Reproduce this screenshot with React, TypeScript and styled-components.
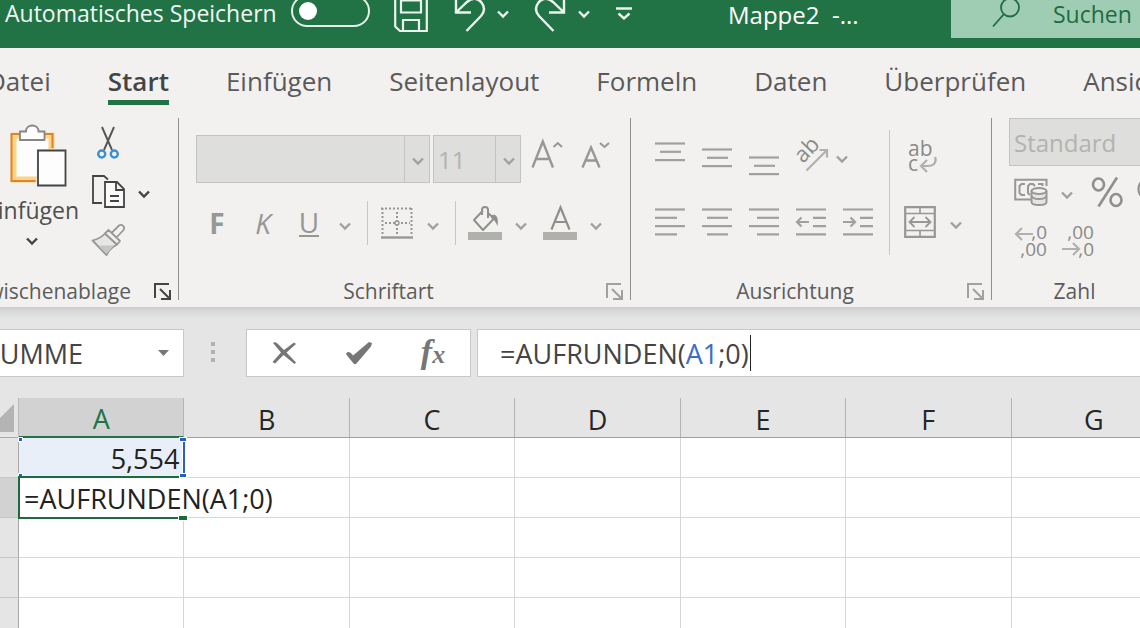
import React from 'react';
import styled, { createGlobalStyle, css } from 'styled-components';

const GlobalStyle = createGlobalStyle`
  *, *::before, *::after { box-sizing: border-box; }
  html, body { margin: 0; }
  body { background: #fff; overflow: hidden; }
  button, input, select { font: inherit; color: inherit; margin: 0; padding: 0; border: 0; background: none; }
  svg { display: block; flex: none; overflow: visible; }
`;

const ui = "'Open Sans', 'Noto Sans', sans-serif";
const green = '#217346';
const ink = '#444444';
const faded = '#a0a09e';

const Window = styled.div`
  display: flex;
  flex-direction: column;
  height: 100vh;
  overflow: hidden;
  font-family: ${ui};
  color: #4f4f4f;
  background: #fff;
`;

/* ---------- title bar ---------- */

const TitleBar = styled.header`
  display: flex;
  align-items: flex-start;
  flex: none;
  height: 48px;
  overflow: hidden;
  background: ${green};
  color: #f1f8f3;
  font-size: 23px;
  line-height: 26px;
  white-space: nowrap;
`;

const AutoSave = styled.label`
  display: flex;
  align-items: flex-start;
  justify-content: space-between;
  width: 370px;
  padding-left: 5px;
`;

const Toggle = styled.input`
  appearance: none;
  display: flex;
  align-items: center;
  width: 79px;
  height: 32px;
  margin-top: -5px;
  padding-left: 6px;
  border: 2px solid #e4f1e8;
  border-radius: 16px;

  &::before {
    content: '';
    width: 18px;
    height: 18px;
    border-radius: 50%;
    background: #fff;
  }
`;

const QuickAccess = styled.div`
  display: flex;
  align-items: center;
  gap: 26px;
  height: 28px;
  margin-left: 24px;
`;

const QuickPair = styled.div`
  display: flex;
  align-items: center;
  gap: 12px;
`;

const QuickButton = styled.button`
  display: flex;
  align-items: center;
  color: #e9f5ed;
`;

const DocTitle = styled.div`
  flex: 1;
  padding: 2px 0 0 96px;
  color: #fff;
  font-size: 24px;
  white-space: pre;
`;

const Search = styled.div`
  display: flex;
  align-items: flex-start;
  gap: 33px;
  width: 189px;
  height: 38px;
  padding-left: 41px;
  background: #9fcdb3;
  color: #1f6b41;
`;

const SearchInput = styled.input`
  flex: 1;
  min-width: 0;
  height: 28px;
  &::placeholder { color: #1f6b41; opacity: 1; }
`;

/* ---------- ribbon tabs ---------- */

const Tabs = styled.nav`
  display: flex;
  flex: none;
  gap: 57px;
  height: 64px;
  padding-top: 15px;
  overflow: hidden;
  background: #f2f1f0;
  font-size: 26px;
  line-height: 36px;
`;

const Tab = styled.button<{ $active?: boolean }>`
  flex: none;
  height: 42px;
  padding-bottom: 6px;
  color: #5a5a5a;
  &:first-child { margin-left: -13px; }
  ${p => p.$active && css`
    font-weight: 600;
    color: ${ink};
    border-bottom: 5px solid ${green};
    padding-bottom: 1px;
  `}
`;

/* ---------- ribbon ---------- */

const Ribbon = styled.div`
  display: flex;
  flex: none;
  padding: 6px 0 7px;
  overflow: hidden;
  background: #f2f1f0;
  border-bottom: 2px solid #cfcfcf;
`;

const Group = styled.section<{ $width: number; $last?: boolean }>`
  display: flex;
  flex-direction: column;
  justify-content: space-between;
  flex: none;
  width: ${p => p.$width}px;
  height: 182px;
  border-right: ${p => (p.$last ? 0 : 1)}px solid #8f8f8f;
`;

const GroupFooter = styled.footer`
  display: flex;
  align-items: center;
  height: 18px;
  padding-right: 7px;
  font-size: 21px;
  line-height: 18px;
  color: #5c5c5c;
`;

const GroupLabel = styled.span<{ $cropped?: boolean }>`
  flex: 1;
  padding-right: 8px;
  text-align: center;
  ${p => p.$cropped && css`
    display: flex;
    justify-content: flex-end;
    padding-right: 23px;
    width: 0;
  `}
`;

const ToolButton = styled.button<{ $width?: number }>`
  display: flex;
  align-items: center;
  justify-content: center;
  flex: none;
  width: ${p => p.$width ?? 34}px;
  height: 34px;
  color: ${faded};
`;

const ArrowButton = styled.button`
  display: flex;
  align-items: center;
  justify-content: center;
  flex: none;
  width: 20px;
  height: 34px;
  padding-top: 6px;
`;

const Split = styled.div<{ $gap?: number; $span?: number }>`
  display: flex;
  align-items: center;
  gap: ${p => p.$gap ?? 9}px;
  grid-column: span ${p => p.$span ?? 1};
`;

const Divider = styled.div<{ $height: number }>`
  flex: none;
  width: 1px;
  height: ${p => p.$height}px;
  background: #c6c6c4;
`;

const ClipboardBody = styled.div`
  display: flex;
  padding-top: 7px;
  gap: 11px;
`;

const PasteButton = styled.button`
  display: flex;
  flex-direction: column;
  align-items: center;
  width: 96px;
  margin-left: -16px;
  color: #4f4f4f;
  font-size: 23px;
  line-height: 30px;

  > svg:first-child { margin: 0 0 8px 12px; }
  > svg:last-child { margin-top: 12px; }
`;

const ClipboardTools = styled.div`
  display: flex;
  flex-direction: column;
  gap: 15px;
`;

const FontBody = styled.div`
  padding: 17px 0 0 17px;
`;

const FontRow = styled.div`
  display: flex;
  align-items: center;
  gap: 3px;
`;

const FormatRow = styled.div`
  display: flex;
  align-items: center;
  gap: 12px;
  margin-top: 18px;
  padding-left: 4px;
  font-size: 28px;
`;

const Combo = styled.div<{ $width: number }>`
  position: relative;
  flex: none;
  width: ${p => p.$width}px;
  height: 48px;
  border: 1px solid #c3c3c1;
  background: #dededd;
`;

const ComboSelect = styled.select`
  appearance: none;
  width: 100%;
  height: 100%;
  padding-left: 4px;
  font-size: 24px;
  color: #b3b3ae;
  opacity: 1;
`;

const ComboArrow = styled.span`
  position: absolute;
  top: 0;
  right: 0;
  display: flex;
  align-items: center;
  justify-content: center;
  width: 25px;
  height: 100%;
  padding: 4px 0 0 2px;
  border-left: 1px solid #c3c3c1;
  pointer-events: none;
`;

const Glyph = styled.span<{ $bold?: boolean; $italic?: boolean; $underline?: boolean }>`
  line-height: 26px;
  color: #979795;
  font-weight: ${p => (p.$bold ? 700 : 400)};
  font-style: ${p => (p.$italic ? 'italic' : 'normal')};
  ${p => p.$underline && css`border-bottom: 2px solid #979795;`}
`;

const AlignBody = styled.div`
  display: flex;
  padding: 12px 0 0 24px;
`;

const AlignGrid = styled.div`
  display: grid;
  grid-template-columns: repeat(5, 30px);
  grid-template-rows: 52px 80px;
  column-gap: 17px;
  align-items: center;
  margin-right: 16px;
`;

const WrapTools = styled.div`
  display: grid;
  grid-template-rows: 52px 80px;
  align-items: center;
  padding-left: 13px;
`;

const NumberBody = styled.div`
  display: flex;
  flex-direction: column;
  gap: 3px;
  padding-left: 17px;
`;

const NumberRow = styled.div`
  display: flex;
  align-items: center;
  gap: 13px;
  height: 46px;
  padding-left: 5px;
`;

/* ---------- formula bar ---------- */

const FormulaBar = styled.div`
  display: flex;
  flex: none;
  height: 89px;
  padding-top: 20px;
  overflow: hidden;
  background: linear-gradient(#d3d5d5, #e5e5e5 10px);
  font-size: 27px;
`;

const NameBox = styled.div`
  display: flex;
  align-items: center;
  flex: none;
  width: 208px;
  height: 48px;
  margin-left: -24px;
  padding-right: 14px;
  border: 1px solid #c8c8c8;
  background: #fff;
`;

const NameInput = styled.input`
  flex: 1;
  min-width: 0;
  padding-left: 8px;
  color: ${ink};
`;

const Grip = styled.div`
  display: grid;
  gap: 4px;
  align-content: center;
  flex: none;
  width: 62px;
  height: 46px;
  justify-content: center;
  padding-right: 4px;
  > i { width: 4px; height: 4px; background: #b2b2b2; }
`;

const Actions = styled.div`
  display: flex;
  align-items: center;
  justify-content: space-between;
  flex: none;
  width: 225px;
  height: 48px;
  margin-right: 6px;
  padding: 0 20px;
  border: 1px solid #c8c8c8;
  background: #fff;
  button { color: #767676; }
`;

const FxMark = styled.span`
  font: italic 700 34px/34px 'Liberation Serif', serif;
  small { font-size: 26px; }
`;

const FormulaField = styled.div`
  display: flex;
  align-items: center;
  flex: 1;
  height: 48px;
  padding-left: 22px;
  border: 1px solid #c8c8c8;
  border-right: 0;
  background: #fff;
  color: ${ink};
  outline: none;
  white-space: nowrap;
`;

const Reference = styled.span`
  color: #3e6cc9;
`;

const Caret = styled.span`
  width: 1px;
  height: 36px;
  margin-left: 1px;
  background: #222;
`;

/* ---------- sheet ---------- */

const Sheet = styled.div`
  flex: 1;
  min-height: 0;
  overflow: hidden;
  background: #fff;
  font-size: 27px;
`;

const Table = styled.table`
  width: 100%;
  min-width: 1177px;
  table-layout: fixed;
  border-collapse: separate;
  border-spacing: 0;
`;

const HeaderCorner = styled.th`
  width: 19px;
  height: 40px;
  padding: 0;
  background: #e5e5e5;
  border-right: 1px solid #b8b8b8;
  border-bottom: 1px solid #a9a9a9;
  > svg { margin-left: -6px; }
`;

const ColumnHead = styled.th<{ $selected?: boolean }>`
  height: 40px;
  padding: 4px 0 0;
  font-weight: 400;
  line-height: 30px;
  color: ${p => (p.$selected ? green : '#262626')};
  background: ${p => (p.$selected ? '#d2d2d2' : '#e5e5e5')};
  border-right: 1px solid #b4b4b4;
  border-bottom: ${p => (p.$selected ? `2px solid ${green}` : '1px solid #a0a0a0')};
`;

const RowHead = styled.th<{ $selected?: boolean }>`
  height: 40px;
  padding: 0;
  background: ${p => (p.$selected ? '#d2d2d2' : '#e5e5e5')};
  border-right: 1px solid #a9a9a9;
  border-bottom: 1px solid #c6c6c6;
`;

const Cell = styled.td<{ $referenced?: boolean; $layer?: number }>`
  position: relative;
  z-index: ${p => p.$layer ?? 0};
  height: 40px;
  padding: 2px 4px 0;
  line-height: 36px;
  text-align: right;
  color: #222;
  background: ${p => (p.$referenced ? '#e9eff8' : '#fff')};
  border-right: 1px solid #d6d6d6;
  border-bottom: 1px solid #d6d6d6;
`;

const RangeMark = styled.span`
  position: absolute;
  inset: 4px -2px 4px auto;
  width: 2px;
  background: #2a5fc0;
  box-shadow: 0 0 0 1px #fff;
  pointer-events: none;
`;

const RangeHandle = styled.i<{ $top?: boolean; $left?: boolean }>`
  position: absolute;
  ${p => (p.$top ? 'top: 0;' : 'bottom: 0;')}
  ${p => (p.$left ? 'left: 0;' : 'right: -3px;')}
  width: ${p => (p.$left ? 3 : 6)}px;
  height: 3px;
  background: #2a5fc0;
  box-shadow: 0 0 0 1px #fff;
`;

const CellEditor = styled.input`
  position: absolute;
  z-index: 1;
  top: 0;
  left: 0;
  width: 258px;
  height: 39px;
  padding: 1px 0 0 5px;
  background: #fff;
  outline: none;
`;

const ActiveFrame = styled.span`
  position: absolute;
  z-index: 2;
  inset: -2px 4px -2px -1px;
  border: 2px solid #1c6b3c;
  border-right: 0;
  pointer-events: none;
`;

const FillHandle = styled.i`
  position: absolute;
  z-index: 2;
  right: -4px;
  bottom: -3px;
  width: 8px;
  height: 4px;
  background: #1c6b3c;
  box-shadow: 0 0 0 1px #fff;
`;

/* ---------- icons ---------- */

const Chevron = ({ color = faded }: { color?: string }) => (
  <svg width="12" height="8" viewBox="0 0 12 8" fill="none" stroke={color} strokeWidth="2.4">
    <path d="M1 1.500 6 6.500 11 1.500" />
  </svg>
);

const SaveIcon = () => (
  <svg width="34" height="36" viewBox="0 0 34 36" fill="none" stroke="currentColor" strokeWidth="2.2">
    <path d="M1.200 0H32.800V35H6L1.200 30.500ZM7 0V16.500H27V0M7 4.500H27M9 35V24H25V35" />
  </svg>
);

const UndoIcon = ({ redo = false }: { redo?: boolean }) => (
  <svg width="31" height="38" viewBox="0 0 31 38" fill="none" stroke="currentColor" strokeWidth="2.4">
    <g transform={redo ? 'matrix(-1 0 0 1 31 0)' : undefined}>
      <path d="M2 4V17.500H17M2.500 17 13 7C18 2.500 24 3 27.500 7.500C31 12 30.500 17 27 21L12.500 36" />
    </g>
  </svg>
);

const CustomizeIcon = () => (
  <svg width="16" height="14" viewBox="0 0 16 14" fill="none" stroke="currentColor" strokeWidth="2.4">
    <path d="M0 1.500H16M2.500 6.500 8 11.500 13.500 6.500" />
  </svg>
);

const SearchIcon = () => (
  <svg width="28" height="28" viewBox="0 0 28 28" fill="none" stroke="#1f6b41" strokeWidth="1.8">
    <circle cx="18" cy="7.500" r="9" />
    <path d="M12 14 1 26.500" />
  </svg>
);

const PasteIcon = () => (
  <svg width="57" height="62" viewBox="0 0 57 62" fill="none">
    <path d="M2 9H43V54H2Z" fill="#fdfdfd" />
    <path d="M3.500 10.500H41.500V24M3.500 9V54.500H27" stroke="#fbd58b" strokeWidth="6" />
    <path d="M42.500 23V9H1.500V56H25.500" stroke="#e08427" strokeWidth="2" />
    <path d="M10 15V6.500H16C16 -1.500 28.500 -1.500 28.500 6.500H34.500V15Z" fill="#fdfdfd" stroke="#858585" strokeWidth="1.800" />
    <path d="M26.500 24H57V62H26.500Z" fill="#f2f1f0" />
    <path d="M28 25.500H55.500V60.500H28Z" fill="#fdfdfd" stroke="#444" strokeWidth="1.800" />
  </svg>
);

const CutIcon = () => (
  <svg width="22" height="33" viewBox="0 0 22 33" fill="none">
    <path d="M5 1 15 24M17 1 7 24" stroke="#555" strokeWidth="1.900" />
    <circle cx="4.700" cy="28" r="3.500" stroke="#3d8fd1" strokeWidth="2.400" />
    <circle cx="17.300" cy="28" r="3.500" stroke="#3d8fd1" strokeWidth="2.400" />
  </svg>
);

const CopyIcon = () => (
  <svg width="33" height="33" viewBox="0 0 33 33" fill="none" stroke="#444" strokeWidth="1.800">
    <path d="M10 28H1V1H12L16 4.500" />
    <path d="M13 7H25L32 14V32H13ZM24 7V15H32M18 21H27M18 26H27" fill="#fafafa" />
  </svg>
);

const BrushIcon = () => (
  <svg width="34" height="32" viewBox="0 0 34 32" fill="none" stroke="#979795" strokeWidth="1.800" strokeLinejoin="round">
    <path d="M1.500 16.500C7 15 11 13 14 9.500L26 20.500C21 23 18 26 15.500 31Z" fill="#e6e6e5" />
    <path d="M7 21.500H23L15.500 30Z" fill="#c6c6c4" stroke="none" />
    <path d="M14 9.500 17.500 6 29 17 26 20.500ZM20.500 9 28 1.500C31 -0.500 34.500 3 32.500 6L25.500 13.500" fill="#f2f1f0" />
  </svg>
);

const LauncherIcon = ({ color = faded }: { color?: string }) => (
  <svg width="17" height="17" viewBox="0 0 17 17" fill="none" stroke={color} strokeWidth="2">
    <path d="M1 15V1H15M6 6 15 15M16 7V16H7" />
  </svg>
);

const GrowIcon = () => (
  <svg width="32" height="34" viewBox="0 0 32 34" fill="none" stroke="#979795">
    <path d="M.500 25.500 10.800 -.500 21 25.500M4 17H17.500" strokeWidth="2.400" />
    <path d="M21.500 5 25.800 1 30 5" strokeWidth="2" />
  </svg>
);

const ShrinkIcon = () => (
  <svg width="32" height="34" viewBox="0 0 32 34" fill="none" stroke="#979795">
    <path d="M-.500 25.500 8 5.500 16.500 25.500M2.500 18.500H13.500" strokeWidth="2.400" />
    <path d="M17 1 21.500 5 26 1" strokeWidth="2" />
  </svg>
);

const BordersIcon = () => (
  <svg width="32" height="32" viewBox="0 0 32 32" fill="none" stroke="#979795" strokeWidth="2">
    <path d="M0 1.500H32M1.500 1V28M30.500 1V28M16 5V28M4 16H29" strokeDasharray="2 2" />
    <circle cx="16" cy="16" r="2" strokeWidth="1.400" fill="#f2f1f0" />
    <path d="M0 30.500H32" strokeWidth="2.400" />
  </svg>
);

const FillIcon = () => (
  <svg width="34" height="34" viewBox="0 0 34 34" fill="none" stroke="#8f8f8c" strokeWidth="2">
    <path d="M15 4.500 6 14 15 24 26 12.500 20 7M14 9V4C14 0 20 0 20 4V12" strokeLinejoin="round" />
    <path d="M23 9.500C28 7 31 11 29.500 20C28 17 27 14 23 12Z" fill="#8f8f8c" stroke="none" />
    <path d="M0 30H34" stroke="#b0b0ac" strokeWidth="8" />
  </svg>
);

const FontColorIcon = () => (
  <svg width="34" height="34" viewBox="0 0 34 34" fill="none" stroke="#8f8f8c" strokeWidth="2.200">
    <path d="M8.500 23.500 17.500 1.500 26.500 23.500M11.500 16H23.500" />
    <path d="M0 30H34" stroke="#b0b0ac" strokeWidth="8" />
  </svg>
);

type Line = [number, number];

const Lines = ({ rows, shift = 0 }: { rows: Line[]; shift?: number }) => (
  <svg width="30" height="34" viewBox="0 0 30 34" fill="none" stroke={faded} strokeWidth="2.200">
    {rows.map(([from, to], i) => (
      <path key={i} d={`M${from} ${shift + 4.5 + i * 8.3}H${to}`} />
    ))}
  </svg>
);

const IndentIcon = ({ right = false }: { right?: boolean }) => (
  <svg width="30" height="34" viewBox="0 0 30 34" fill="none" stroke={faded} strokeWidth="2.200">
    <path d="M0 4.500H30M17 12.800H30M17 21.100H30M0 29.400H30" />
    <path d={right ? 'M0 17H12M7.500 12.500 12 17 7.500 21.500' : 'M13 17H1M5.500 12.500 1 17 5.500 21.500'} />
  </svg>
);

const OrientationIcon = () => (
  <svg width="34" height="34" viewBox="0 0 34 34" fill="none">
    <text transform="translate(7 25) rotate(-46)" fill="#8a8a88" fontFamily="Open Sans" fontSize="22">ab</text>
    <path d="M10.500 31.500 31 11M23.500 11H31V18.500" stroke="#b0b0ae" strokeWidth="2.200" />
  </svg>
);

const WrapIcon = () => (
  <svg width="30" height="34" viewBox="0 0 30 34" fill="none">
    <g fill="#8a8a88" fontFamily="Open Sans" fontSize="21">
      <text x="3" y="17">ab</text>
      <text x="3" y="32">c</text>
    </g>
    <path d="M30 18C32 23 29 27 23 27H16M22 21 16 27 22 33" stroke="#b0b0ae" strokeWidth="2.200" />
  </svg>
);

const MergeIcon = () => (
  <svg width="32" height="32" viewBox="0 0 32 32" fill="none" stroke="#979795" strokeWidth="2.200">
    <path d="M1.200 1.200H30.800V30.800H1.200Z" />
    <path d="M1 7.500H31M1 24.500H31M16 1V7.500M16 24.500V31" strokeWidth="1.600" />
    <path d="M6 16H26M10.500 11 5.500 16 10.500 21M21.500 11 26.500 16 21.500 21" strokeWidth="1.800" />
  </svg>
);

const CurrencyIcon = () => (
  <svg width="34" height="28" viewBox="0 0 34 28" fill="none" stroke="#979795" strokeWidth="2">
    <path d="M17 21.500H1.200V1.800H32.500V8" />
    <path d="M11 6H7.500L5.500 8V15L7.500 17H11M21 8 19 6H16L14 8V15L16 17M24 6H28.500V8" />
    <path d="M17.500 13V24C17.500 28 32.500 28 32.500 24V13" fill="#e4e4e2" />
    <ellipse cx="25" cy="13" rx="7.500" ry="3" fill="#f2f1f0" />
    <path d="M17.500 18C19 22 31 22 32.500 18" />
  </svg>
);

const PercentIcon = () => (
  <svg width="32" height="32" viewBox="0 0 32 32" fill="none" stroke="#8f8f8d" strokeWidth="2.600">
    <ellipse cx="7.500" cy="8.500" rx="5.500" ry="6" />
    <ellipse cx="25" cy="24" rx="5.500" ry="6" />
    <path d="M26 1.500 7.500 30.500" />
  </svg>
);

const ThousandsIcon = () => (
  <svg width="34" height="32" viewBox="0 0 34 32" fill="none" stroke="#8f8f8d" strokeWidth="2.200">
    <ellipse cx="6" cy="13" rx="4.500" ry="7.500" />
    <ellipse cx="17" cy="13" rx="4.500" ry="7.500" />
    <ellipse cx="28" cy="13" rx="4.500" ry="7.500" />
  </svg>
);

const DecimalIcon = ({ less = false }: { less?: boolean }) => (
  <svg width="32" height="32" viewBox="0 0 32 32" fill="none" stroke="#b0b0ae" strokeWidth="2.200">
    <g fill="#8a8a88" stroke="none" fontFamily="Open Sans" fontSize="19" textAnchor="end">
      <text x="32" y="14">{less ? ',00' : ',0'}</text>
      <text x="32" y="31">{less ? ',0' : ',00'}</text>
    </g>
    <path d={less ? 'M0 24H17M11 18 17 24 11 30' : 'M18 9H1M7 3 1 9 7 15'} />
  </svg>
);

const CancelIcon = () => (
  <svg width="26" height="24" viewBox="0 0 26 24" fill="#767676">
    <path d="M2 2C3 1 5 1 7 3L13 9 23 1.500 25 3 15.500 11.500 25 21.500 23.500 23 12.500 14 4 22.500 1.500 21 10 11.500Z" />
  </svg>
);

const EnterIcon = () => (
  <svg width="28" height="24" viewBox="0 0 28 24" fill="#767676">
    <path d="M1 13C2 10 5 10 8 14.500L24 1 27 2 26 5.500 11 23H9C6 19 3 16 1 13Z" />
  </svg>
);

/* ---------- page ---------- */

const tabs = ['Datei', 'Start', 'Einfügen', 'Seitenlayout', 'Formeln', 'Daten', 'Überprüfen', 'Ansicht'];
const columns = ['A', 'B', 'C', 'D', 'E', 'F', 'G'];
const rows = [1, 2, 3, 4, 5];

const centered: Line[] = [[0, 30], [5, 26], [0, 30], [5, 26]];

export default function App() {
  return (
    <Window>
      <GlobalStyle />

      <TitleBar>
        <AutoSave>
          Automatisches Speichern
          <Toggle type="checkbox" role="switch" />
        </AutoSave>
        <QuickAccess>
          <QuickButton aria-label="Speichern"><SaveIcon /></QuickButton>
          <QuickPair>
            <QuickButton aria-label="Rückgängig"><UndoIcon /></QuickButton>
            <QuickButton aria-label="Rückgängig-Liste"><Chevron color="#e9f5ed" /></QuickButton>
          </QuickPair>
          <QuickPair>
            <QuickButton aria-label="Wiederholen"><UndoIcon redo /></QuickButton>
            <QuickButton aria-label="Wiederholen-Liste"><Chevron color="#e9f5ed" /></QuickButton>
          </QuickPair>
          <QuickButton aria-label="Symbolleiste anpassen"><CustomizeIcon /></QuickButton>
        </QuickAccess>
        <DocTitle>{'Mappe2  -...'}</DocTitle>
        <Search>
          <SearchIcon />
          <SearchInput type="text" placeholder="Suchen" aria-label="Suchen" />
        </Search>
      </TitleBar>

      <Tabs>
        {tabs.map(t => <Tab key={t} $active={t === 'Start'}>{t}</Tab>)}
      </Tabs>

      <Ribbon>
        <Group $width={179}>
          <ClipboardBody>
            <PasteButton>
              <PasteIcon />
              Einfügen
              <Chevron color={ink} />
            </PasteButton>
            <ClipboardTools>
              <ToolButton aria-label="Ausschneiden"><CutIcon /></ToolButton>
              <Split>
                <ToolButton aria-label="Kopieren"><CopyIcon /></ToolButton>
                <ArrowButton aria-label="Kopieroptionen"><Chevron color={ink} /></ArrowButton>
              </Split>
              <ToolButton aria-label="Format übertragen"><BrushIcon /></ToolButton>
            </ClipboardTools>
          </ClipboardBody>
          <GroupFooter>
            <GroupLabel $cropped>Zwischenablage</GroupLabel>
            <button aria-label="Zwischenablage öffnen"><LauncherIcon color={ink} /></button>
          </GroupFooter>
        </Group>

        <Group $width={452}>
          <FontBody>
            <FontRow>
              <Combo $width={234}>
                <ComboSelect disabled aria-label="Schriftart"><option /></ComboSelect>
                <ComboArrow><Chevron /></ComboArrow>
              </Combo>
              <Combo $width={88}>
                <ComboSelect disabled aria-label="Schriftgrad"><option>11</option></ComboSelect>
                <ComboArrow><Chevron /></ComboArrow>
              </Combo>
              <ToolButton $width={48} aria-label="Schriftgrad vergrößern"><GrowIcon /></ToolButton>
              <ToolButton $width={48} aria-label="Schriftgrad verkleinern"><ShrinkIcon /></ToolButton>
            </FontRow>
            <FormatRow>
              <ToolButton><Glyph $bold>F</Glyph></ToolButton>
              <ToolButton><Glyph $italic>K</Glyph></ToolButton>
              <Split>
                <ToolButton><Glyph $underline>U</Glyph></ToolButton>
                <ArrowButton aria-label="Unterstreichungsart"><Chevron /></ArrowButton>
              </Split>
              <Divider $height={44} />
              <Split>
                <ToolButton aria-label="Rahmen"><BordersIcon /></ToolButton>
                <ArrowButton aria-label="Rahmenart"><Chevron /></ArrowButton>
              </Split>
              <Divider $height={44} />
              <Split>
                <ToolButton aria-label="Füllfarbe"><FillIcon /></ToolButton>
                <ArrowButton aria-label="Füllfarbe wählen"><Chevron /></ArrowButton>
              </Split>
              <Split>
                <ToolButton aria-label="Schriftfarbe"><FontColorIcon /></ToolButton>
                <ArrowButton aria-label="Schriftfarbe wählen"><Chevron /></ArrowButton>
              </Split>
            </FormatRow>
          </FontBody>
          <GroupFooter>
            <GroupLabel>Schriftart</GroupLabel>
            <button aria-label="Schriftart öffnen"><LauncherIcon /></button>
          </GroupFooter>
        </Group>

        <Group $width={361}>
          <AlignBody>
            <AlignGrid>
              <ToolButton $width={30} aria-label="Oben ausrichten"><Lines rows={centered.slice(0, 3)} /></ToolButton>
              <ToolButton $width={30} aria-label="Zentriert ausrichten"><Lines rows={centered.slice(0, 3)} shift={6} /></ToolButton>
              <ToolButton $width={30} aria-label="Unten ausrichten"><Lines rows={centered.slice(0, 3)} shift={14} /></ToolButton>
              <Split $gap={2} $span={2}>
                <ToolButton aria-label="Ausrichtung"><OrientationIcon /></ToolButton>
                <ArrowButton aria-label="Ausrichtung wählen"><Chevron /></ArrowButton>
              </Split>
              <ToolButton $width={30} aria-label="Linksbündig"><Lines rows={[[0, 30], [0, 22], [0, 30], [0, 22]]} /></ToolButton>
              <ToolButton $width={30} aria-label="Zentriert"><Lines rows={centered} /></ToolButton>
              <ToolButton $width={30} aria-label="Rechtsbündig"><Lines rows={[[0, 30], [8, 30], [0, 30], [8, 30]]} /></ToolButton>
              <ToolButton $width={30} aria-label="Einzug verkleinern"><IndentIcon /></ToolButton>
              <ToolButton $width={30} aria-label="Einzug vergrößern"><IndentIcon right /></ToolButton>
            </AlignGrid>
            <Divider $height={125} />
            <WrapTools>
              <ToolButton aria-label="Textumbruch"><WrapIcon /></ToolButton>
              <Split>
                <ToolButton aria-label="Verbinden und zentrieren"><MergeIcon /></ToolButton>
                <ArrowButton aria-label="Verbinden wählen"><Chevron /></ArrowButton>
              </Split>
            </WrapTools>
          </AlignBody>
          <GroupFooter>
            <GroupLabel>Ausrichtung</GroupLabel>
            <button aria-label="Ausrichtung öffnen"><LauncherIcon /></button>
          </GroupFooter>
        </Group>

        <Group $width={180} $last>
          <NumberBody>
            <Combo $width={163}>
              <ComboSelect disabled aria-label="Zahlenformat"><option>Standard</option></ComboSelect>
            </Combo>
            <NumberRow>
              <Split>
                <ToolButton aria-label="Buchhaltungszahlenformat"><CurrencyIcon /></ToolButton>
                <ArrowButton aria-label="Währung wählen"><Chevron /></ArrowButton>
              </Split>
              <ToolButton aria-label="Prozentformat"><PercentIcon /></ToolButton>
              <ToolButton aria-label="Tausendertrennzeichen"><ThousandsIcon /></ToolButton>
            </NumberRow>
            <NumberRow>
              <ToolButton aria-label="Dezimalstelle hinzufügen"><DecimalIcon /></ToolButton>
              <ToolButton aria-label="Dezimalstelle entfernen"><DecimalIcon less /></ToolButton>
            </NumberRow>
          </NumberBody>
          <GroupFooter>
            <GroupLabel>Zahl</GroupLabel>
          </GroupFooter>
        </Group>
      </Ribbon>

      <FormulaBar>
        <NameBox>
          <NameInput defaultValue="SUMME" aria-label="Namenfeld" />
          <svg width="11" height="6" viewBox="0 0 11 6" fill="#777"><path d="M0 0H11L5.500 6Z" /></svg>
        </NameBox>
        <Grip><i /><i /><i /></Grip>
        <Actions>
          <ToolButton aria-label="Abbrechen"><CancelIcon /></ToolButton>
          <ToolButton aria-label="Eingeben"><EnterIcon /></ToolButton>
          <ToolButton aria-label="Funktion einfügen"><FxMark>f<small>x</small></FxMark></ToolButton>
        </Actions>
        <FormulaField role="textbox" aria-label="Bearbeitungsleiste" contentEditable suppressContentEditableWarning>
          <span>=AUFRUNDEN(<Reference>A1</Reference>;0)</span>
          <Caret />
        </FormulaField>
      </FormulaBar>

      <Sheet>
        <Table>
          <thead>
            <tr>
              <HeaderCorner>
                <svg width="20" height="28" viewBox="0 0 20 28" fill="#b4b4b4"><path d="M20 0V28H0V20Z" /></svg>
              </HeaderCorner>
              {columns.map(c => <ColumnHead key={c} scope="col" $selected={c === 'A'}>{c}</ColumnHead>)}
            </tr>
          </thead>
          <tbody>
            {rows.map(r => (
              <tr key={r}>
                <RowHead scope="row" $selected={r === 2} aria-label={String(r)} />
                {columns.map(c => {
                  if (c === 'A' && r === 1) {
                    return (
                      <Cell key={c} $referenced $layer={2}>
                        5,554
                        <RangeMark />
                        <RangeHandle $top $left />
                        <RangeHandle $top />
                        <RangeHandle $left />
                        <RangeHandle />
                      </Cell>
                    );
                  }
                  if (c === 'A' && r === 2) {
                    return (
                      <Cell key={c} $layer={3}>
                        <CellEditor defaultValue="=AUFRUNDEN(A1;0)" aria-label="Zelle A2" />
                        <ActiveFrame />
                        <FillHandle />
                      </Cell>
                    );
                  }
                  return <Cell key={c} />;
                })}
              </tr>
            ))}
          </tbody>
        </Table>
      </Sheet>
    </Window>
  );
}
